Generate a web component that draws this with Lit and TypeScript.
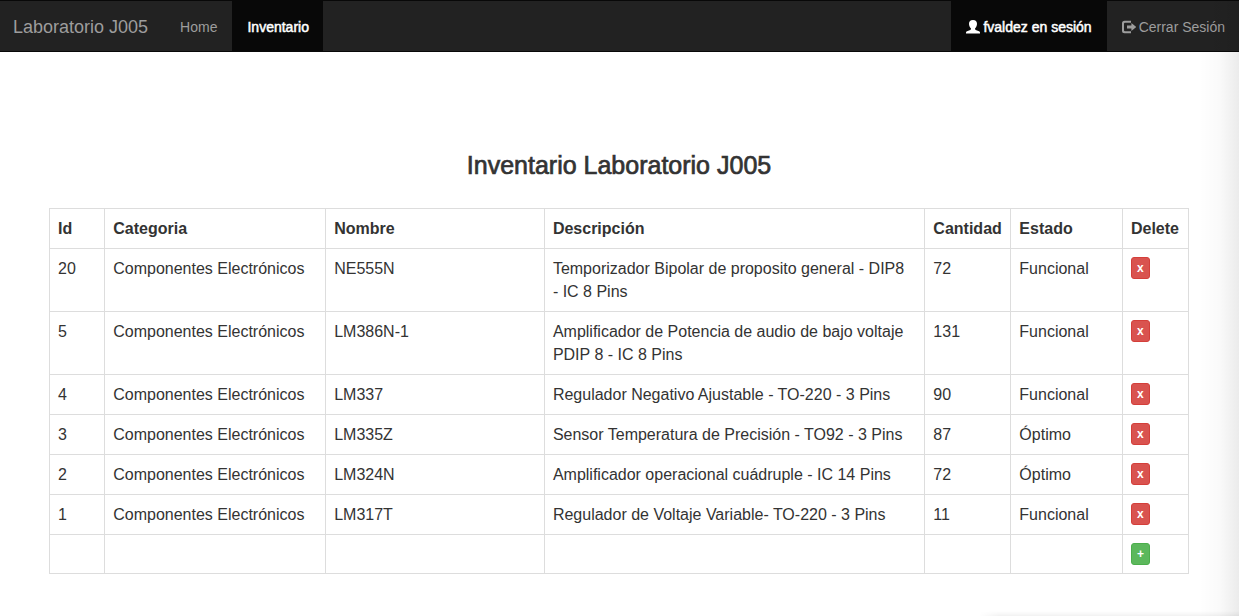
import { LitElement, html, css } from "lit";
import { customElement, state } from "lit/decorators.js";

interface Item {
  id: number;
  category: string;
  name: string;
  description: string;
  quantity: number;
  status: string;
}

const ELECTRONICS = "Componentes Electrónicos";

@customElement("app-navbar")
class AppNavbar extends LitElement {
  static styles = css`
    :host {
      display: block;
    }
    .navbar {
      display: flex;
      justify-content: space-between;
      min-height: 50px;
      border-top: 1px solid #080808;
      border-bottom: 1px solid #080808;
      background: #222;
    }
    .group {
      display: flex;
    }
    .brand,
    .link {
      display: flex;
      align-items: center;
      color: #9d9d9d;
      text-decoration: none;
      line-height: 20px;
      padding: 16px 15px 14px;
      white-space: nowrap;
    }
    .brand {
      font-size: 18px;
      padding-left: 13px;
      padding-right: 17px;
    }
    .link {
      font-size: 14px;
      gap: 3px;
    }
    .group .link:last-child {
      padding-right: 14px;
    }
    .link.active {
      color: #fff;
      background: #080808;
      -webkit-text-stroke: 0.5px #fff;
    }
    .link:hover,
    .brand:hover {
      color: #fff;
    }
    .icon {
      width: 14px;
      height: 14px;
      fill: currentColor;
    }
  `;

  render() {
    return html`
      <nav class="navbar">
        <div class="group">
          <a class="brand" href="#">Laboratorio J005</a>
          <a class="link" href="#">Home</a>
          <a class="link active" href="#" aria-current="page">Inventario</a>
        </div>
        <div class="group">
          <a class="link active" href="#">
            <svg class="icon" viewBox="0 0 14 14" aria-hidden="true">
              <path
                d="M7 0C4.300 0 3 1.500 3 3.700c0 1.900.7 3.500 1.900 4.500v.9c0 .4-.2.7-.6.9L1 11.300c-.7.3-1 .7-1 1.300v.9h14v-.9c0-.6-.3-1-1-1.300L9.700 10c-.4-.2-.6-.5-.6-.9v-.9C10.300 7.200 11 5.600 11 3.700 11 1.500 9.700 0 7 0z"
              />
            </svg>
            <span>fvaldez en sesión</span>
          </a>
          <a class="link" href="#">
            <svg class="icon" viewBox="0 0 14 14" aria-hidden="true">
              <path
                d="M9 .8H2.500A2.500 2.500 0 0 0 0 3.300v7.400a2.500 2.500 0 0 0 2.500 2.500H9v-2H3a1 1 0 0 1-1-1V3.800a1 1 0 0 1 1-1h6z"
              />
              <path d="M9.400 2.900 14.200 7l-4.800 4.100V8.400H5V5.600h4.400z" />
            </svg>
            <span>Cerrar Sesión</span>
          </a>
        </div>
      </nav>
    `;
  }
}

@customElement("inventory-table")
class InventoryTable extends LitElement {
  @state() private items: Item[] = [
    { id: 20, category: ELECTRONICS, name: "NE555N", description: "Temporizador Bipolar de proposito general - DIP8 - IC 8 Pins", quantity: 72, status: "Funcional" },
    { id: 5, category: ELECTRONICS, name: "LM386N-1", description: "Amplificador de Potencia de audio de bajo voltaje PDIP 8 - IC 8 Pins", quantity: 131, status: "Funcional" },
    { id: 4, category: ELECTRONICS, name: "LM337", description: "Regulador Negativo Ajustable - TO-220 - 3 Pins", quantity: 90, status: "Funcional" },
    { id: 3, category: ELECTRONICS, name: "LM335Z", description: "Sensor Temperatura de Precisión - TO92 - 3 Pins", quantity: 87, status: "Óptimo" },
    { id: 2, category: ELECTRONICS, name: "LM324N", description: "Amplificador operacional cuádruple - IC 14 Pins", quantity: 72, status: "Óptimo" },
    { id: 1, category: ELECTRONICS, name: "LM317T", description: "Regulador de Voltaje Variable- TO-220 - 3 Pins", quantity: 11, status: "Funcional" },
  ];

  static styles = css`
    :host {
      display: block;
    }
    .table {
      width: 100%;
      table-layout: fixed;
      border-collapse: collapse;
      font-size: 16px;
      line-height: 23px;
    }
    .id { width: 4.85%; }
    .category { width: 19.4%; }
    .name { width: 19.2%; }
    .quantity { width: 7.55%; }
    .status { width: 9.8%; }
    .action { width: 5.8%; }
    th,
    td {
      border: 1px solid #ddd;
      padding: 8px;
      text-align: left;
      vertical-align: top;
    }
    th {
      white-space: nowrap;
    }
    .description {
      padding-right: 15px;
    }
    .button {
      display: block;
      font: bold 12px/18px "Liberation Sans", Arial, sans-serif;
      padding: 1px 5px;
      border: 1px solid;
      border-radius: 3px;
      color: #fff;
      cursor: pointer;
    }
    .danger {
      background: #d9534f;
      border-color: #d43f3a;
    }
    .success {
      background: #5cb85c;
      border-color: #4cae4c;
    }
  `;

  private remove(id: number) {
    this.items = this.items.filter((item) => item.id !== id);
  }

  render() {
    return html`
      <table class="table">
        <colgroup>
          <col class="id" />
          <col class="category" />
          <col class="name" />
          <col />
          <col class="quantity" />
          <col class="status" />
          <col class="action" />
        </colgroup>
        <thead>
          <tr>
            <th scope="col">Id</th>
            <th scope="col">Categoria</th>
            <th scope="col">Nombre</th>
            <th scope="col">Descripción</th>
            <th scope="col">Cantidad</th>
            <th scope="col">Estado</th>
            <th scope="col">Delete</th>
          </tr>
        </thead>
        <tbody>
          ${this.items.map(
            (item) => html`
              <tr>
                <td>${item.id}</td>
                <td>${item.category}</td>
                <td>${item.name}</td>
                <td class="description">${item.description}</td>
                <td>${item.quantity}</td>
                <td>${item.status}</td>
                <td>
                  <button class="button danger" type="button" @click=${() => this.remove(item.id)}>x</button>
                </td>
              </tr>
            `
          )}
          <tr>
            <td></td>
            <td></td>
            <td></td>
            <td></td>
            <td></td>
            <td></td>
            <td><button class="button success" type="button">+</button></td>
          </tr>
        </tbody>
      </table>
    `;
  }
}

@customElement("app-root")
class AppRoot extends LitElement {
  static styles = css`
    :host {
      display: flex;
      flex-direction: column;
      position: relative;
      box-sizing: border-box;
      min-height: 100vh;
      background: #fff;
      color: #333;
      font-family: "Liberation Sans", Arial, sans-serif;
    }
    .content {
      box-sizing: border-box;
      width: 100%;
      max-width: 1171px;
      margin: 0 auto;
      padding: 100px 16px 40px 15px;
    }
    .title {
      margin: 0 0 29px;
      font-size: 25px;
      font-weight: 500;
      line-height: 27px;
      text-align: center;
      -webkit-text-stroke: 0.7px #333;
    }
    .edge {
      position: absolute;
      inset: 0 0 0 auto;
      width: 40px;
      background: linear-gradient(to right, rgba(0, 0, 0, 0), rgba(0, 0, 0, 0.02) 50%, rgba(0, 0, 0, 0.08));
      pointer-events: none;
    }
    .edge.bottom {
      inset: auto 0 0 auto;
      width: 21%;
      height: 5px;
      background: linear-gradient(to bottom, rgba(0, 0, 0, 0), rgba(0, 0, 0, 0.05));
      mask-image: linear-gradient(to right, transparent, #000 20px);
    }
  `;

  render() {
    return html`
      <app-navbar></app-navbar>
      <main class="content">
        <h1 class="title">Inventario Laboratorio J005</h1>
        <inventory-table></inventory-table>
      </main>
      <div class="edge"></div>
      <div class="edge bottom"></div>
    `;
  }
}
